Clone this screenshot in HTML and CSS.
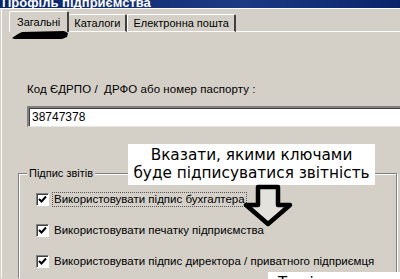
FILE: index.html
```html
<!DOCTYPE html>
<html lang="uk">
<head>
<meta charset="utf-8">
<link rel="stylesheet" href="styles.css">
</head>
<body>
<div class="titlebar"><span>Профіль підприємства</span></div>
<div class="dialog">
  <div class="tabs">
    <div class="tab active">Загальні
      <svg class="mark" width="58" height="8" viewBox="0 0 58 8"><polygon points="0,7 6,3 10,1 52,0 56,2 55,6 50,8 2,8" fill="#000"/></svg>
    </div>
    <div class="tab">Каталоги</div>
    <div class="tab">Електронна пошта</div>
    <div class="tab-rest"></div>
  </div>
  <div class="panel">
    <div class="field-label">Код ЄДРПО / &nbsp;ДРФО або номер паспорту :</div>
    <div class="input">38747378</div>
    <div class="group">
      <div class="legend">Підпис звітів</div>
      <div class="check"><span class="box"><svg width="9" height="9" viewBox="0 0 9 9"><path d="M1 4 L3.5 6.5 L8 1.5" fill="none" stroke="#000" stroke-width="2"/></svg></span><span class="text focus">Використовувати підпис бухгалтера</span></div>
      <div class="check"><span class="box"><svg width="9" height="9" viewBox="0 0 9 9"><path d="M1 4 L3.5 6.5 L8 1.5" fill="none" stroke="#000" stroke-width="2"/></svg></span><span class="text">Використовувати печатку підприємства</span></div>
      <div class="check"><span class="box"><svg width="9" height="9" viewBox="0 0 9 9"><path d="M1 4 L3.5 6.5 L8 1.5" fill="none" stroke="#000" stroke-width="2"/></svg></span><span class="text">Використовувати підпис директора / приватного підприємця</span></div>
    </div>
  </div>
</div>
<div class="callout">Вказати, якими ключами<br>буде підписуватися звітність</div>
<svg class="arrow" width="52" height="44" viewBox="0 0 52 44"><path d="M10 3 H30 V21 H42 L20 40 L-2 21 H10 Z" transform="translate(5,0)" fill="#e4e2dd" stroke="#000" stroke-width="4.5" stroke-linejoin="round"/></svg>
<div class="note">Тут і</div>
</body>
</html>
```
FILE: styles.css
```css
* { box-sizing: border-box; }
html, body { margin: 0; padding: 0; }
body {
  width: 400px;
  height: 279px;
  overflow: hidden;
  background: #d4d0c8;
  font-family: "Liberation Sans", Arial, sans-serif;
  font-size: 11px;
  color: #000;
  position: relative;
}
.titlebar {
  height: 9px;
  background: linear-gradient(to right, #0a246a, #1c3a84 60%, #0a246a);
  overflow: hidden;
  display: flex;
  align-items: flex-end;
  padding-left: 2px;
  border-bottom: 1px solid #fff;
}
.titlebar span {
  color: #fff;
  font-weight: bold;
  font-size: 13px;
  line-height: 13px;
  margin-bottom: -1px;
  white-space: nowrap;
}
.dialog {
  padding-left: 4px;
  border-left: 1px solid #fff;
  margin-left: 1px;
  height: 269px;
  overflow: hidden;
}
.tabs {
  display: flex;
  align-items: flex-end;
  height: 23px;
  padding-left: 3px;
}
.tab {
  position: relative;
  height: 18px;
  padding: 0 5px;
  display: flex;
  align-items: center;
  border-top: 1px solid #fff;
  border-left: 1px solid #fff;
  border-right: 2px solid #404040;
  border-radius: 2px 2px 0 0;
  font-size: 11px;
  white-space: nowrap;
  border-bottom: 1px solid #fff;
}
.tab.active {
  height: 21px;
  padding: 0 7px;
  border-bottom: none;
  z-index: 1;
  margin-right: -1px;
}
.mark {
  position: absolute;
  left: 2px;
  top: 19px;
}
.tab-rest {
  flex: 1;
  border-bottom: 1px solid #fff;
}
.panel {
  padding: 50px 0 0 21px;
}
.field-label {
  font-size: 11.5px;
  letter-spacing: 0.05px;
  height: 14px;
  line-height: 14px;
  white-space: nowrap;
}
.input {
  margin-top: 10px;
  height: 21px;
  width: 390px;
  background: #fff;
  border-top: 2px solid #808080;
  border-left: 2px solid #808080;
  box-shadow: inset 1px 1px 0 #404040;
  padding-left: 3px;
  font-size: 12px;
  line-height: 18px;
  border-bottom: 1px solid #e8e6e0;
}
.group {
  position: relative;
  margin: 46px 0 0 -9px;
  width: 379px;
  height: 110px;
  border: 1px solid #808080;
  box-shadow: 1px 1px 0 #fff, inset 1px 1px 0 #fff;
  padding: 19px 0 0 17px;
  display: flex;
  flex-direction: column;
  gap: 18px;
}
.legend {
  position: absolute;
  left: 8px;
  top: -7px;
  background: #d4d0c8;
  padding: 0 2px;
  font-size: 11px;
  line-height: 13px;
}
.check {
  display: flex;
  align-items: center;
  height: 13px;
  gap: 3px;
  white-space: nowrap;
}
.box {
  width: 13px;
  height: 13px;
  background: #fff;
  border-top: 1px solid #808080;
  border-left: 1px solid #808080;
  border-right: 1px solid #fff;
  border-bottom: 1px solid #fff;
  box-shadow: inset 1px 1px 0 #404040;
  display: flex;
  align-items: center;
  justify-content: center;
  flex: none;
}
.text {
  font-size: 11.5px;
  line-height: 13px;
  padding: 0 1px;
  border: 1px dotted transparent;
}
.text.focus { border-color: #555; }
.callout {
  position: absolute;
  left: 128px;
  top: 144px;
  width: 247px;
  height: 41px;
  background: #fff;
  font-family: "DejaVu Sans", sans-serif;
  font-size: 15.3px;
  line-height: 18px;
  text-align: center;
  padding-top: 2px;
  white-space: nowrap;
}
.arrow {
  position: absolute;
  left: 243px;
  top: 184px;
}
.note {
  position: absolute;
  left: 268px;
  top: 272px;
  width: 132px;
  height: 7px;
  background: #fff;
  font-family: "DejaVu Sans", sans-serif;
  font-size: 15px;
  line-height: 18px;
  padding: 2px 0 0 10px;
  overflow: hidden;
}
```
